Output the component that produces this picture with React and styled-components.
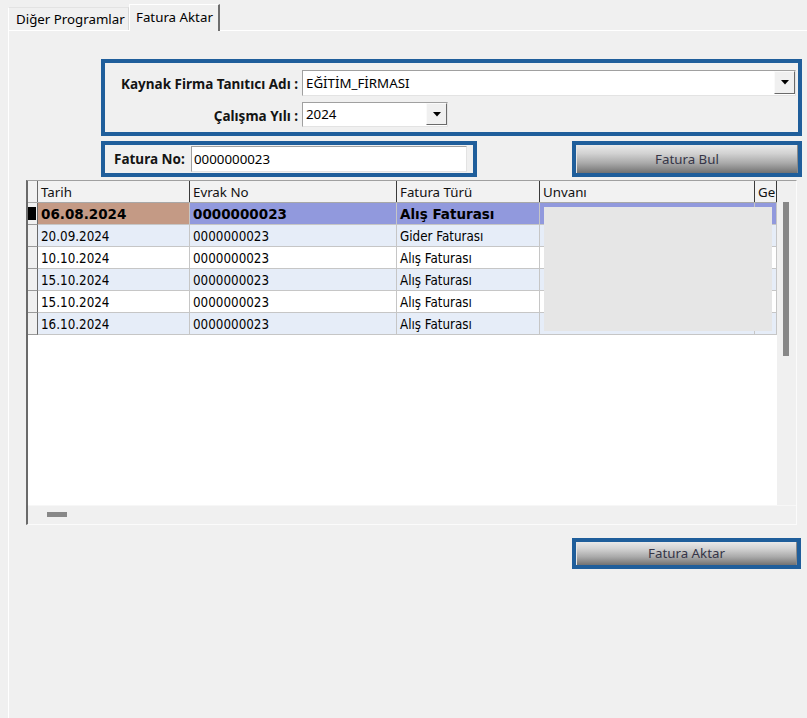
import React from 'react';
import styled, { createGlobalStyle } from 'styled-components';

const GlobalStyle = createGlobalStyle`
  html, body { margin: 0; padding: 0; background: #f0f0f0; overflow: hidden; }
  body { font-family: "Noto Sans", "Segoe UI", sans-serif; font-size: 13.3px; color: #000; }
  * { box-sizing: border-box; }
`;

const Window = styled.div`
  width: 807px;
  height: 718px;
  display: flex;
  flex-direction: column;
  background: #f0f0f0;
  overflow: hidden;
`;

const TabStrip = styled.div`
  display: flex;
  align-items: flex-end;
  height: 30px;
  padding-left: 8px;
  position: relative;
  z-index: 1;
`;

const Tab = styled.div`
  height: ${p => (p.$active ? '27px' : '23px')};
  width: ${p => (p.$active ? '91px' : '121px')};
  margin-bottom: ${p => (p.$active ? '-1px' : '0')};
  padding-left: ${p => (p.$active ? '6px' : '7px')};
  background: #f0f0f0;
  border-top: 1px solid ${p => (p.$active ? '#ffffff' : '#e3e3e3')};
  border-left: 1px solid #ffffff;
  border-right: ${p => (p.$active ? '2px solid #6e6e6e' : '1px solid #d8d8d8')};
  display: flex;
  align-items: center;
  padding-bottom: ${p => (p.$active ? '3px' : '0')};
  font-size: 13.3px;
  white-space: nowrap;
  color: #000;
`;

const Panel = styled.div`
  flex: 1;
  margin-left: 8px;
  border-top: 1px solid #ffffff;
  border-left: 1px solid #ffffff;
  display: flex;
  flex-direction: column;
`;

const BlueBox = styled.div`
  border: 4px solid #1f5e9b;
  width: ${p => p.$w}px;
  height: ${p => p.$h}px;
`;

const SourceBox = styled(BlueBox)`
  margin: 28px 0 0 92px;
  display: grid;
  grid-template-columns: 193px auto;
  grid-auto-rows: min-content;
  column-gap: 4px;
  row-gap: 6px;
  padding: 7px 2px 0 0;
  align-items: center;
`;

const Label = styled.span`
  font-weight: 700;
  font-size: 13.5px;
  color: #141414;
  text-align: right;
  white-space: nowrap;
  padding-top: 2px;
`;

const Combo = styled.div`
  display: flex;
  width: ${p => p.$w}px;
  height: ${p => p.$h}px;
  background: #fff;
  border: 1px solid;
  border-color: #a0a0a0 #e3e3e3 #e3e3e3 #a0a0a0;
  padding: 0 0 1px 0;
`;

const ComboText = styled.span`
  flex: 1;
  padding-left: 3px;
  display: flex;
  align-items: center;
  font-size: 13.3px;
  color: #000;
`;

const DropBtn = styled.span`
  width: 21px;
  background: #f0f0f0;
  border: 1px solid;
  border-color: #fafafa #6a6a6a #6a6a6a #fafafa;
  display: flex;
  align-items: center;
  justify-content: center;
`;

const SearchRow = styled.div`
  display: flex;
  margin: 5px 0 0 92px;
`;

const InvoiceBox = styled(BlueBox)`
  display: flex;
  align-items: center;
  padding-left: 9px;
`;

const NoLabel = styled(Label)`
  width: 77px;
  text-align: left;
  padding-top: 0;
`;

const TextInput = styled.div`
  width: 276px;
  height: 26px;
  background: #fff;
  border: 1px solid;
  border-color: #a0a0a0 #e3e3e3 #e3e3e3 #a0a0a0;
  padding-left: 2px;
  display: flex;
  align-items: center;
  font-size: 13.3px;
`;

const ButtonFrame = styled(BlueBox)`
  margin-left: ${p => p.$ml}px;
  margin-top: ${p => p.$mt || 0}px;
  display: flex;
`;

const ActionButton = styled.div`
  flex: 1;
  display: flex;
  align-items: center;
  justify-content: center;
  background: linear-gradient(to bottom, #e9e9e9 0%, #d2d2d2 30%, #a9a9a9 65%, #727272 100%);
  border-left: 1px solid #e6e6e6;
  border-right: 1px solid #8a8a8a;
  color: #353547;
  font-size: 13.3px;
  padding-bottom: 1px;
`;

const GridFrame = styled.div`
  margin: 3px 0 0 17px;
  width: 771px;
  height: 345px;
  border-left: 2px solid #6a6a6a;
  border-top: 1px solid #a0a0a0;
  border-right: 1px solid #fbfbfb;
  border-bottom: 1px solid #fbfbfb;
  display: flex;
  flex-direction: column;
  background: #f0f0f0;
`;

const GridMain = styled.div`
  display: flex;
  flex: 1;
  min-height: 0;
`;

const DataArea = styled.div`
  width: 749px;
  background: #fff;
  position: relative;
  display: flex;
  flex-direction: column;
  overflow: hidden;
`;

const COLS = '10px 152px 207px 143px 215px 22px';

const HeaderRow = styled.div`
  display: grid;
  grid-template-columns: ${COLS};
  height: 22px;
  background: #f2f2f2;
  border-bottom: 1px solid #a8a8a8;
`;

const HeadCell = styled.div`
  border-right: 1px solid ${p => (p.$corner ? '#6a6a6a' : '#3a3a3a')};
  padding-left: 3px;
  display: flex;
  align-items: center;
  font-size: 13.3px;
  color: #111;
  white-space: nowrap;
  overflow: hidden;
`;

const Row = styled.div`
  display: grid;
  grid-template-columns: ${COLS};
  height: 22px;
`;

const RowHead = styled.div`
  background: #f0f0f0;
  border-right: 1px solid #6a6a6a;
  border-bottom: 1px solid #9a9a9a;
  display: flex;
  align-items: center;
`;

const Marker = styled.span`
  width: 8px;
  height: 13px;
  background: #000;
`;

const Cell = styled.div`
  background: ${p => p.$bg};
  border-right: 1px solid #c6c6c6;
  border-bottom: 1px solid #c6c6c6;
  padding-left: 3px;
  padding-top: 1px;
  display: flex;
  align-items: center;
  white-space: nowrap;
  overflow: hidden;
  font-family: ${p => (p.$bold ? '"DejaVu Sans"' : '"DejaVu Sans Condensed", "DejaVu Sans"')}, sans-serif;
  font-stretch: ${p => (p.$bold ? 'normal' : 'condensed')};
  font-size: ${p => (p.$bold ? '13.5px' : '13.3px')};
  font-weight: ${p => (p.$bold ? 700 : 400)};
  color: #000;
`;

const Redaction = styled.div`
  position: absolute;
  left: 516px;
  top: 26px;
  width: 228px;
  height: 124px;
  background: #e6e6e6;
`;

const VScroll = styled.div`
  flex: 1;
  background: #f0f0f0;
`;

const VThumb = styled.div`
  margin: 21px 0 0 6px;
  width: 6px;
  height: 154px;
  background: #888;
`;

const HScroll = styled.div`
  height: 19px;
  background: #f0f0f0;
  border-top: 1px solid #f7f7f7;
`;

const HThumb = styled.div`
  margin: 6px 0 0 19px;
  width: 20px;
  height: 5px;
  background: #888;
`;

const Arrow = () => (
  <svg width="8" height="5" viewBox="0 0 8 5">
    <polygon points="0,0 8,0 4,4.5" fill="#000" />
  </svg>
);

const rows = [
  { date: '06.08.2024', no: '0000000023', type: 'Alış Faturası', selected: true },
  { date: '20.09.2024', no: '0000000023', type: 'Gider Faturası' },
  { date: '10.10.2024', no: '0000000023', type: 'Alış Faturası' },
  { date: '15.10.2024', no: '0000000023', type: 'Alış Faturası' },
  { date: '15.10.2024', no: '0000000023', type: 'Alış Faturası' },
  { date: '16.10.2024', no: '0000000023', type: 'Alış Faturası' },
];

export default function App() {
  return (
    <Window>
      <GlobalStyle />
      <TabStrip>
        <Tab>Diğer Programlar</Tab>
        <Tab $active>Fatura Aktar</Tab>
      </TabStrip>
      <Panel>
        <SourceBox $w={701} $h={77}>
          <Label>Kaynak Firma Tanıtıcı Adı :</Label>
          <Combo $w={494} $h={26}>
            <ComboText>EĞİTİM_FİRMASI</ComboText>
            <DropBtn><Arrow /></DropBtn>
          </Combo>
          <Label>Çalışma Yılı :</Label>
          <Combo $w={146} $h={25}>
            <ComboText>2024</ComboText>
            <DropBtn><Arrow /></DropBtn>
          </Combo>
        </SourceBox>

        <SearchRow>
          <InvoiceBox $w={376} $h={36}>
            <NoLabel>Fatura No:</NoLabel>
            <TextInput>0000000023</TextInput>
          </InvoiceBox>
          <ButtonFrame $w={230} $h={36} $ml={95}>
            <ActionButton>Fatura Bul</ActionButton>
          </ButtonFrame>
        </SearchRow>

        <GridFrame>
          <GridMain>
            <DataArea>
              <HeaderRow>
                <HeadCell $corner />
                <HeadCell>Tarih</HeadCell>
                <HeadCell>Evrak No</HeadCell>
                <HeadCell>Fatura Türü</HeadCell>
                <HeadCell>Unvanı</HeadCell>
                <HeadCell>Ge</HeadCell>
              </HeaderRow>
              {rows.map((r, i) => {
                const base = r.selected ? '#9199dd' : i % 2 === 1 ? '#e6edf8' : '#ffffff';
                return (
                  <Row key={i}>
                    <RowHead>{r.selected && <Marker />}</RowHead>
                    <Cell $bg={r.selected ? '#c49a85' : base} $bold={r.selected}>{r.date}</Cell>
                    <Cell $bg={base} $bold={r.selected}>{r.no}</Cell>
                    <Cell $bg={base} $bold={r.selected}>{r.type}</Cell>
                    <Cell $bg={base} $bold={r.selected} />
                    <Cell $bg={base} $bold={r.selected} />
                  </Row>
                );
              })}
              <Redaction />
            </DataArea>
            <VScroll>
              <VThumb />
            </VScroll>
          </GridMain>
          <HScroll>
            <HThumb />
          </HScroll>
        </GridFrame>

        <ButtonFrame $w={229} $h={31} $ml={563} $mt={13}>
          <ActionButton>Fatura Aktar</ActionButton>
        </ButtonFrame>
      </Panel>
    </Window>
  );
}
